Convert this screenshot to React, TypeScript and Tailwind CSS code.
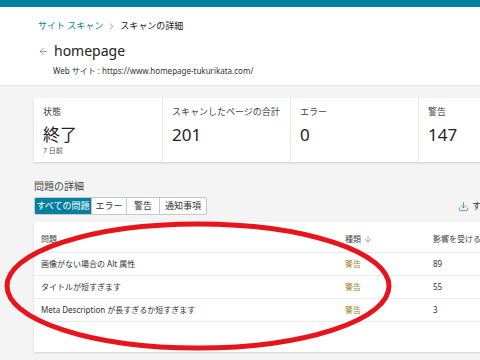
import { ArrowLeft, ChevronRight, ArrowDown, Download } from 'lucide-react'

const stats = [
  { label: '状態', value: '終了', sub: '7 日前' },
  { label: 'スキャンしたページの合計', value: '201' },
  { label: 'エラー', value: '0' },
  { label: '警告', value: '147' },
]

const tabs = ['すべての問題', 'エラー', '警告', '通知事項']

const issues = [
  { name: '画像がない場合の Alt 属性', type: '警告', pages: '89' },
  { name: 'タイトルが短すぎます', type: '警告', pages: '55' },
  { name: 'Meta Description が長すぎるか短すぎます', type: '警告', pages: '3' },
]

export default function App() {
  return (
    <div
      className="relative w-[480px] h-[360px] overflow-hidden bg-[#f4f4f4] text-[#323130]"
      style={{ fontFamily: '"Noto Sans", "Noto Sans CJK JP", sans-serif' }}
    >
      <div className="h-[7px] bg-[#037fa0]" />

      {/* Header */}
      <div className="h-[79px] bg-white border-b border-[#e3e3e3] pl-[38px] pt-[11px]">
        <div className="flex items-center h-[16px] text-[9px]">
          <span className="text-[#0a7fa3]">サイト スキャン</span>
          <ChevronRight size={11} strokeWidth={1.3} className="mx-[3px] text-[#555]" />
          <span className="text-[#222]">スキャンの詳細</span>
        </div>
        <div className="flex items-center h-[18px] mt-[8px]">
          <ArrowLeft size={11} strokeWidth={1.3} className="text-[#666]" />
          <span className="ml-[5px] text-[14px] leading-none text-[#222]">homepage</span>
        </div>
        <div className="mt-[5px] pl-[15px] text-[8px] leading-[12px] text-[#333]">
          Web サイト : https://www.homepage-tukurikata.com/
        </div>
      </div>

      {/* Stats */}
      <div className="pl-[34px] pt-[12px]">
        <div className="flex w-[600px] h-[64px] bg-white shadow-[0_1px_2px_rgba(0,0,0,0.15)]">
          {stats.map((s, i) => (
            <div
              key={s.label}
              className={`w-[128px] shrink-0 pl-[9px] pt-[8px] ${i > 0 ? 'border-l border-[#e6e6e6]' : ''}`}
            >
              <div className="text-[9px] leading-[12px] text-[#444]">{s.label}</div>
              <div className="mt-[7px] text-[17px] leading-[20px] text-[#222]">{s.value}</div>
              {s.sub && <div className="mt-[1px] text-[7px] leading-[10px] text-[#555]">{s.sub}</div>}
            </div>
          ))}
        </div>

        {/* Issue details */}
        <div className="mt-[17px] text-[10px] leading-[14px] text-[#444]">問題の詳細</div>
        <div className="flex items-center mt-[4px] w-[600px]">
          <div className="flex shrink-0 h-[18px] rounded-[2px] border border-[#c8c8c8] bg-white text-[9px] overflow-hidden whitespace-nowrap">
            {tabs.map((t, i) => (
              <div
                key={t}
                className={`flex shrink-0 items-center justify-center ${
                  i === 0
                    ? 'w-[56px] bg-[#037fa0] text-white'
                    : 'border-l border-[#c8c8c8] text-[#333] ' + (i === 3 ? 'w-[47px]' : i === 1 ? 'w-[35px]' : 'w-[33px]')
                }`}
              >
                {t}
              </div>
            ))}
          </div>
          <div className="ml-[251px] flex items-center shrink-0 whitespace-nowrap text-[9px] text-[#333]">
            <Download size={11} strokeWidth={1.5} className="text-[#0a7fa3]" />
            <span className="ml-[3px]">すべてエクスポート</span>
          </div>
        </div>

        {/* Table */}
        <div className="mt-[7px] w-[600px] h-[130px] bg-white shadow-[0_1px_2px_rgba(0,0,0,0.15)] text-[8px]">
          <div className="flex items-center h-[31px] pt-[3px] border-b border-[#ececec] text-[#444]">
            <div className="w-[311px] pl-[7px]">問題</div>
            <div className="w-[88px] flex items-center">
              種類
              <ArrowDown size={10} strokeWidth={1.3} className="ml-[2px] text-[#666]" />
            </div>
            <div>影響を受けるページ</div>
          </div>
          {issues.map((r) => (
            <div key={r.name} className="flex items-center h-[23px] border-b border-[#ececec] text-[#333]">
              <div className="w-[311px] pl-[7px]">{r.name}</div>
              <div className="w-[88px] text-[#a6821e]">{r.type}</div>
              <div>{r.pages}</div>
            </div>
          ))}
        </div>
      </div>

      {/* Red annotation */}
      <svg className="absolute left-0 top-0 pointer-events-none" width="480" height="360">
        <ellipse cx="198" cy="286" rx="191" ry="62" fill="none" stroke="#e8141c" strokeWidth="5" />
      </svg>
    </div>
  )
}
